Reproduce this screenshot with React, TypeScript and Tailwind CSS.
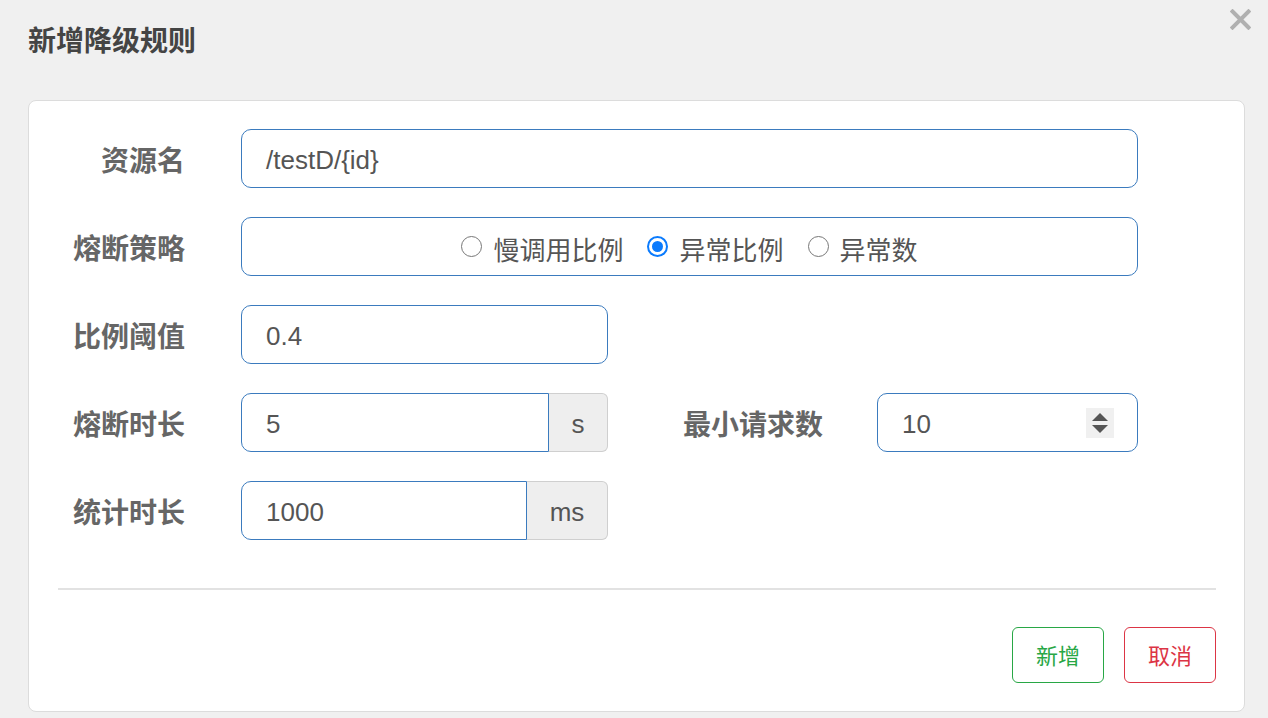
import React from 'react';

const FONT = { fontFamily: '"Liberation Sans", "Noto Sans CJK SC", sans-serif' };

function Label({ children, width = 'w-[127px]' }: { children: React.ReactNode; width?: string }) {
  return (
    <div className={`${width} shrink-0 pt-[7px] text-right text-[28px] font-bold leading-[52px] text-[#666]`}>
      {children}
    </div>
  );
}

function Radio({ label, checked }: { label: string; checked?: boolean }) {
  return (
    <label className="flex items-center gap-[11px]">
      {checked ? (
        <span className="flex h-[21px] w-[21px] items-center justify-center rounded-full border-[2px] border-[#0b7bfd] bg-white">
          <span className="h-[11px] w-[11px] rounded-full bg-[#0b7bfd]" />
        </span>
      ) : (
        <span className="h-[21px] w-[21px] rounded-full border-[1.5px] border-[#777] bg-white" />
      )}
      <span className="pt-[9px] text-[26px] text-[#555]">{label}</span>
    </label>
  );
}

function AddonInput({ value, unit, inputWidth, addonWidth }: { value: string; unit: string; inputWidth: string; addonWidth: string }) {
  return (
    <div className="flex h-[59px] w-[367px]">
      <div className={`${inputWidth} flex h-full items-center rounded-l-[10px] border border-[#3b7bbe] pl-[24px] pt-[3px] text-[26px] text-[#555]`}>
        {value}
      </div>
      <div className={`${addonWidth} flex h-full items-center justify-center rounded-r-[6px] border border-l-0 border-[#cfcfcf] bg-[#eeeeee] pt-[3px] text-[26px] text-[#555]`}>
        {unit}
      </div>
    </div>
  );
}

export default function App() {
  return (
    <div className="h-[718px] w-full overflow-hidden bg-[#f0f0f0] pl-[28px] pr-[23px]" style={FONT}>
      {/* Header */}
      <div className="flex h-[100px] items-start justify-between">
        <h1 className="pt-[22px] text-[28px] font-bold leading-[40px] text-[#444]">新增降级规则</h1>
        <svg className="mr-[-6px] mt-[9px]" width="21" height="21" viewBox="0 0 21 21">
          <path d="M2.5 2.5 L18.5 18.5 M18.5 2.5 L2.5 18.5" stroke="#b0b0b0" strokeWidth="4" strokeLinecap="square" />
        </svg>
      </div>

      {/* Card */}
      <div className="h-[612px] rounded-[8px] border border-[#dcdcdc] bg-white pl-[29px] pr-[28px] pt-[28px]">
        <div className="flex flex-col gap-[29px]">
          <div className="flex items-center">
            <Label>资源名</Label>
            <div className="ml-[56px] flex h-[59px] w-[897px] items-center rounded-[10px] border border-[#3b7bbe] pl-[24px] pt-[3px] text-[26px] text-[#555]">
              /testD/{'{'}id{'}'}
            </div>
          </div>

          <div className="flex items-center">
            <Label>熔断策略</Label>
            <div className="ml-[56px] flex h-[59px] w-[897px] items-center justify-center gap-[24px] rounded-[10px] border border-[#3b7bbe]">
              <Radio label="慢调用比例" />
              <Radio label="异常比例" checked />
              <Radio label="异常数" />
            </div>
          </div>

          <div className="flex items-center">
            <Label>比例阈值</Label>
            <div className="ml-[56px] flex h-[59px] w-[367px] items-center rounded-[10px] border border-[#3b7bbe] pl-[24px] pt-[3px] text-[26px] text-[#555]">
              0.4
            </div>
          </div>

          <div className="flex items-center">
            <Label>熔断时长</Label>
            <div className="ml-[56px]">
              <AddonInput value="5" unit="s" inputWidth="w-[308px]" addonWidth="w-[59px]" />
            </div>
            <Label width="w-[215px]">最小请求数</Label>
            <div className="ml-[54px] flex h-[59px] w-[261px] items-center justify-between rounded-[10px] border border-[#3b7bbe] pl-[24px] pr-[23px] text-[26px] text-[#555]">
              <span className="pt-[3px]">10</span>
              <span className="flex h-[30px] w-[28px] flex-col items-center justify-center gap-[4px] bg-[#f0f0f0]">
                <svg width="16" height="8" viewBox="0 0 16 8">
                  <path d="M8 0 L16 8 L0 8 Z" fill="#555" />
                </svg>
                <svg width="16" height="8" viewBox="0 0 16 8">
                  <path d="M0 0 L16 0 L8 8 Z" fill="#555" />
                </svg>
              </span>
            </div>
          </div>

          <div className="flex items-center">
            <Label>统计时长</Label>
            <div className="ml-[56px]">
              <AddonInput value="1000" unit="ms" inputWidth="w-[286px]" addonWidth="w-[81px]" />
            </div>
          </div>
        </div>

        <div className="mt-[48px] h-[2px] bg-[#e2e2e2]" />

        <div className="mt-[37px] flex justify-end gap-[20px]">
          <button className="h-[56px] w-[92px] rounded-[6px] border border-[#28a745] bg-white pt-[3px] text-[22px] text-[#28a745]">
            新增
          </button>
          <button className="h-[56px] w-[92px] rounded-[6px] border border-[#dc3545] bg-white pt-[3px] text-[22px] text-[#dc3545]">
            取消
          </button>
        </div>
      </div>
    </div>
  );
}
